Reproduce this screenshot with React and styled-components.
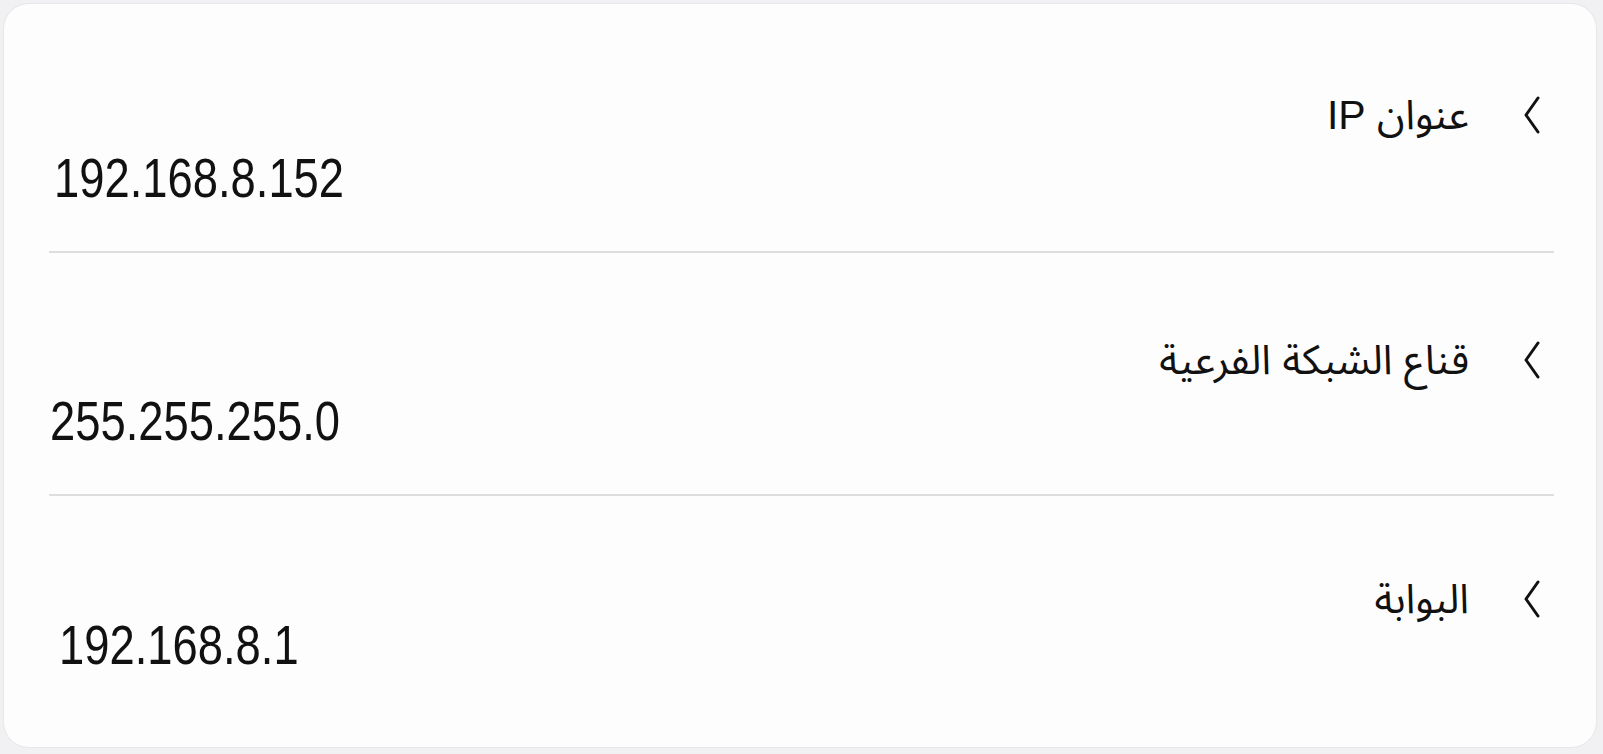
import React from "react";
import styled, { createGlobalStyle } from "styled-components";

const Global = createGlobalStyle`
  html, body {
    margin: 0;
    padding: 0;
    background: #f1f1f3;
  }
  body {
    font-family: "Liberation Sans", sans-serif;
  }
`;

const rows = [
  { title: "عنوان IP", value: "192.168.8.152", height: 249, top: 91, gap: 18, indent: 5 },
  { title: "قناع الشبكة الفرعية", value: "255.255.255.0", height: 243, top: 87, gap: 16, indent: 1 },
  { title: "البوابة", value: "192.168.8.1", height: 249, top: 83, gap: 1, indent: 10 },
];

const App = () => {
  return (
    <>
      <Global />
      <Card>
        {rows.map((r, i) => (
          <Row key={i} $height={r.height} $top={r.top} $last={i === rows.length - 1}>
            <Header>
              <Chevron />
              <Title>{r.title}</Title>
            </Header>
            <Value $gap={r.gap} $indent={r.indent}>
              <Digits>{r.value}</Digits>
            </Value>
          </Row>
        ))}
      </Card>
    </>
  );
};

export default App;

const Chevron = () => (
  <ChevronSvg viewBox="0 0 17 38" width="17" height="38">
    <path d="M15 2 L3 19 L15 36" fill="none" stroke="#111" strokeWidth="3" strokeLinecap="round" strokeLinejoin="round" />
  </ChevronSvg>
);

const Card = styled.div`
  box-sizing: border-box;
  margin: 3px 6px 0 3px;
  height: 745px;
  background: #fdfdfd;
  border: 1px solid #e7e7e9;
  border-radius: 26px;
  padding: 0 42px 0 45px;
  display: flex;
  flex-direction: column;
`;

const Row = styled.div`
  box-sizing: border-box;
  height: ${(p) => p.$height}px;
  padding-top: ${(p) => p.$top}px;
  border-bottom: ${(p) => (p.$last ? "none" : "2px solid #dedede")};
  flex-shrink: 0;
`;

const Header = styled.div`
  direction: rtl;
  display: flex;
  align-items: center;
  height: 40px;
  padding-right: 14px;
  gap: 54px;
`;

const ChevronSvg = styled.svg`
  display: block;
  flex-shrink: 0;
`;

const Title = styled.span`
  font-family: "Liberation Sans", "Noto Sans Arabic", "DejaVu Sans", sans-serif;
  font-size: 41px;
  line-height: 40px;
  color: #111;
  white-space: nowrap;
`;

const Value = styled.div`
  margin-top: ${(p) => p.$gap}px;
  padding-left: ${(p) => p.$indent}px;
  font-family: "Liberation Sans", sans-serif;
  font-size: 56px;
  line-height: 50px;
  color: #111;
  direction: ltr;
`;

const Digits = styled.span`
  display: inline-block;
  transform: scaleX(0.81);
  transform-origin: left center;
  white-space: nowrap;
`;
